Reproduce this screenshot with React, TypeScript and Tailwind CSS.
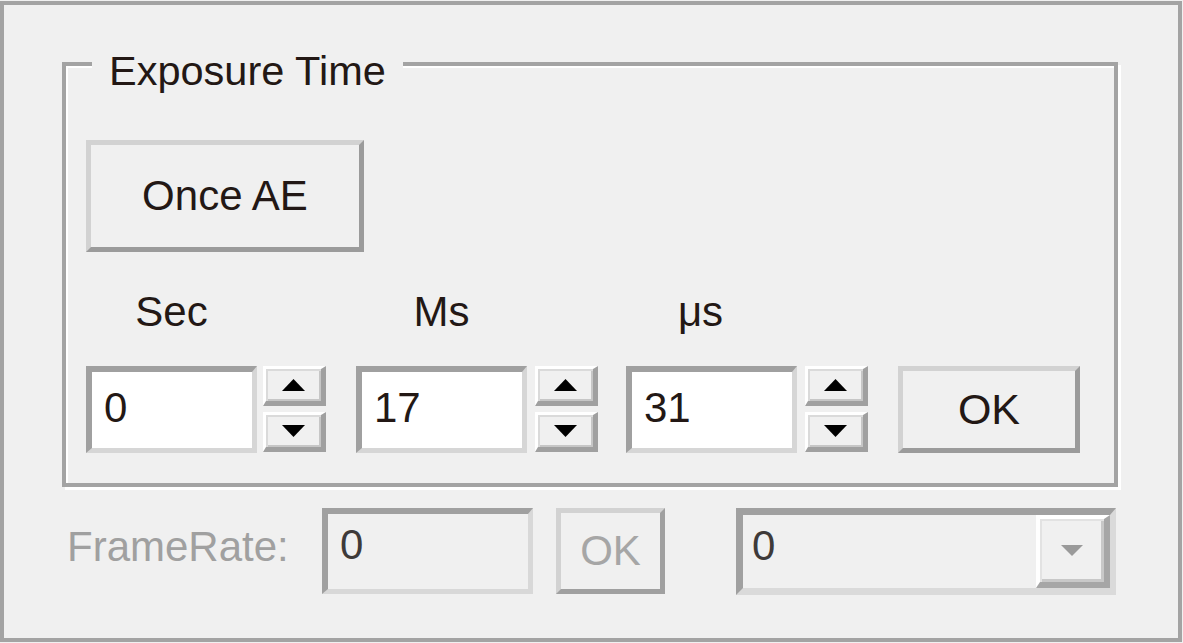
import React from "react";

const font = { fontFamily: '"Liberation Sans", Arial, sans-serif' };

function Tri({ up, color = "#000", w = 23, h = 12 }: { up?: boolean; color?: string; w?: number; h?: number }) {
  return (
    <svg width={w} height={h} viewBox={`0 0 ${w} ${h}`}>
      {up ? (
        <polygon points={`0,${h} ${w},${h} ${w / 2},0`} fill={color} />
      ) : (
        <polygon points={`0,0 ${w},0 ${w / 2},${h}`} fill={color} />
      )}
    </svg>
  );
}

function SpinBtn({ up }: { up?: boolean }) {
  return (
    <div className="w-[63px] h-[40px] flex items-center justify-center bg-[#f0f0f0] border-t-[3px] border-l-[3px] border-t-white border-l-white border-r-[5px] border-b-[5px] border-r-[#a0a0a0] border-b-[#a0a0a0] shadow-[inset_2px_2px_0_#dadada,inset_-2px_-2px_0_#c6c6c6]">
      <Tri up={up} />
    </div>
  );
}

function Spin() {
  return (
    <div className="flex flex-col gap-[6px] w-[63px]">
      <SpinBtn up />
      <SpinBtn />
    </div>
  );
}

function Field({ value }: { value: string }) {
  return (
    <div className="w-[171px] h-[87px] bg-white border-t-[6px] border-l-[6px] border-t-[#a0a0a0] border-l-[#a0a0a0] border-r-[5px] border-b-[5px] border-r-[#d6d6d6] border-b-[#d6d6d6] flex items-center pl-[12px] pb-[4px] text-[42px] leading-none text-[#231815]">
      {value}
    </div>
  );
}

export default function App() {
  return (
    <div className="w-[1183px] h-[643px] bg-[#f0f0f0] pt-px" style={font}>
      <div className="w-[1182px] h-[641px] border-4 border-[#a3a3a3] flex flex-col pt-[57px]">
        {/* Group box */}
        <div className="relative ml-[58px] w-[1056px] h-[425px] border-4 border-[#a3a3a3] shadow-[3px_3px_0_#ffffff,inset_2px_2px_0_#ffffff] flex flex-col pl-[20px] pt-[74px]">
          <div className="absolute left-[26px] top-[-16px] px-[17px] bg-[#f0f0f0] text-[41.5px] leading-none text-[#231815]">
            Exposure Time
          </div>
          <div className="w-[278px] h-[112px] flex items-center justify-center border-[5px] border-t-[#d2d2d2] border-l-[#d2d2d2] border-r-[#9b9b9b] border-b-[#9b9b9b] text-[42px] leading-none text-[#231815]">
            Once AE
          </div>
          <div className="flex mt-[39px] text-[42px] leading-none text-[#231815]">
            <div className="w-[171px] text-center">Sec</div>
            <div className="w-[99px]" />
            <div className="w-[171px] text-center">Ms</div>
            <div className="w-[99px]" />
            <div className="w-[171px] text-center pr-[22px]">μs</div>
          </div>
          <div className="flex mt-[33px] items-start">
            <Field value="0" />
            <div className="ml-[6px]"><Spin /></div>
            <div className="ml-[30px]"><Field value="17" /></div>
            <div className="ml-[8px]"><Spin /></div>
            <div className="ml-[28px]"><Field value="31" /></div>
            <div className="ml-[8px]"><Spin /></div>
            <div className="ml-[30px] w-[182px] h-[87px] flex items-center justify-center border-[5px] border-t-[#d2d2d2] border-l-[#d2d2d2] border-r-[#9b9b9b] border-b-[#9b9b9b] text-[43px] leading-none text-[#231815]">
              OK
            </div>
          </div>
        </div>

        {/* Bottom row */}
        <div className="flex items-start mt-[21px] pl-[63px]">
          <div className="w-[255px] mt-[18px] text-[42px] leading-none text-[#a0a0a0]">FrameRate:</div>
          <div className="w-[211px] h-[86px] border-t-[6px] border-l-[6px] border-t-[#a0a0a0] border-l-[#a0a0a0] border-r-[5px] border-b-[5px] border-r-[#d8d8d8] border-b-[#d8d8d8] pl-[12px] pt-[10px] text-[42px] leading-none text-[#3e3a39]">
            0
          </div>
          <div className="ml-[23px] w-[109px] h-[86px] flex items-center justify-center border-[5px] border-t-[#d2d2d2] border-l-[#d2d2d2] border-r-[#a0a0a0] border-b-[#a0a0a0] text-[42px] leading-none text-[#a6a6a6]">
            OK
          </div>
          <div className="ml-[71px] w-[380px] h-[87px] flex border-t-[7px] border-l-[7px] border-t-[#a0a0a0] border-l-[#a0a0a0] border-r-[6px] border-b-[7px] border-r-[#dadada] border-b-[#dadada]">
            <div className="flex-1 pl-[9px] pt-[10px] text-[42px] leading-none text-[#3e3a39]">0</div>
            <div className="w-[74px] h-full flex items-center justify-center border-t-[4px] border-l-[4px] border-t-white border-l-white border-r-[6px] border-b-[6px] border-r-[#a6a6a6] border-b-[#a6a6a6] shadow-[inset_2px_2px_0_#e2e2e2,inset_-3px_-3px_0_#c8c8c8]">
              <Tri color="#9a9a9a" w={22} h={11} />
            </div>
          </div>
        </div>
      </div>
    </div>
  );
}
